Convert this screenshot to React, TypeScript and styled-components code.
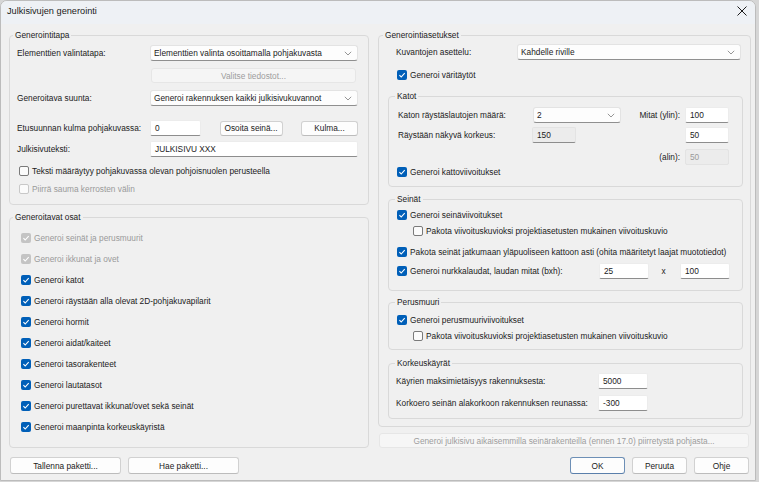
import React from 'react';
import styled, { createGlobalStyle } from 'styled-components';

const GlobalStyle = createGlobalStyle`
  html, body {
    margin: 0;
    padding: 0;
    background: #d6d6d6;
  }
  body {
    font-family: "Liberation Sans", Arial, sans-serif;
    font-size: 8.3px;
    color: #1b1b1b;
  }
  * {
    box-sizing: border-box;
  }
`;

const Chevron = () => (
  <svg width="8" height="5" viewBox="0 0 8 5">
    <path d="M0.8 0.8 L4 4 L7.2 0.8" fill="none" stroke="#8a8a8a" strokeWidth="0.9" />
  </svg>
);

const CheckMark = () => (
  <svg width="10" height="10" viewBox="0 0 10 10">
    <path d="M2.4 5.2 L4.2 7 L7.7 3.2" fill="none" stroke="#fff" strokeWidth="1.1" />
  </svg>
);

const Select: React.FC<{ value: string }> = ({ value }) => (
  <SelectBox>
    <span>{value}</span>
    <Chevron />
  </SelectBox>
);

const Check: React.FC<{
  label: string;
  checked?: boolean;
  disabled?: boolean;
  mt?: number;
  ml?: number;
}> = ({ label, checked, disabled, mt = 0, ml = 0 }) => (
  <CheckRow $mt={mt} $ml={ml}>
    <CheckBox $checked={!!checked} $disabled={!!disabled}>
      {checked && <CheckMark />}
    </CheckBox>
    <CheckText $disabled={!!disabled}>{label}</CheckText>
  </CheckRow>
);

const osat = [
  { label: 'Generoi seinät ja perusmuurit', disabled: true },
  { label: 'Generoi ikkunat ja ovet', disabled: true },
  { label: 'Generoi katot' },
  { label: 'Generoi räystään alla olevat 2D-pohjakuvapilarit' },
  { label: 'Generoi hormit' },
  { label: 'Generoi aidat/kaiteet' },
  { label: 'Generoi tasorakenteet' },
  { label: 'Generoi lautatasot' },
  { label: 'Generoi purettavat ikkunat/ovet sekä seinät' },
  { label: 'Generoi maanpinta korkeuskäyristä' },
];

const App: React.FC = () => {
  return (
    <>
      <GlobalStyle />
      <Window>
        <TitleBar>
          <Title>Julkisivujen generointi</Title>
          <svg width="10" height="10" viewBox="0 0 10 10">
            <path d="M0.5 0.5 L9.5 9.5 M9.5 0.5 L0.5 9.5" stroke="#1b1b1b" strokeWidth="1" />
          </svg>
        </TitleBar>

        <Body>
          <Columns>
            <Column>
              <Group>
                <Legend $ml={3}>Generointitapa</Legend>
                <Stack $pad="5px 10px 8px 7px">
                  <FormRow $cols="133px 1fr">
                    <Label>Elementtien valintatapa:</Label>
                    <Select value="Elementtien valinta osoittamalla pohjakuvasta" />
                  </FormRow>
                  <FormRow $cols="134px 1fr" $mt={7} $h={14}>
                    <span />
                    <Button $disabled $w={205}>Valitse tiedostot...</Button>
                  </FormRow>
                  <FormRow $cols="133px 1fr" $mt={8}>
                    <Label>Generoitava suunta:</Label>
                    <Select value="Generoi rakennuksen kaikki julkisivukuvannot" />
                  </FormRow>
                  <FormRow $cols="133px 1fr" $mt={14}>
                    <Label>Etusuunnan kulma pohjakuvassa:</Label>
                    <Inline>
                      <Field $w={51}>0</Field>
                      <Button $w={63}>Osoita seinä...</Button>
                      <Button $w={57}>Kulma...</Button>
                    </Inline>
                  </FormRow>
                  <FormRow $cols="133px 1fr" $mt={5}>
                    <Label>Julkisivuteksti:</Label>
                    <Field>JULKISIVU XXX</Field>
                  </FormRow>
                  <Check mt={7} ml={2} label="Teksti määräytyy pohjakuvassa olevan pohjoisnuolen perusteella" />
                  <Check mt={4} ml={2} disabled label="Piirrä sauma kerrosten välin" />
                </Stack>
              </Group>

              <Group $mt={7}>
                <Legend $ml={3}>Generoitavat osat</Legend>
                <Stack $pad="9px 10px 13px 11px" $gap={7}>
                  {osat.map((o) => (
                    <Check key={o.label} label={o.label} checked disabled={o.disabled} />
                  ))}
                </Stack>
              </Group>
            </Column>

            <Column>
              <Group>
                <Legend $ml={4}>Generointiasetukset</Legend>
                <Stack $pad="4px 7px 7px 9px">
                  <FormRow $cols="121px 1fr" $pl={8} $pr={2}>
                    <Label>Kuvantojen asettelu:</Label>
                    <Select value="Kahdelle riville" />
                  </FormRow>
                  <Check mt={8} ml={9} checked label="Generoi väritäytöt" />

                  <Group $mt={9}>
                    <Legend $ml={6}>Katot</Legend>
                    <Stack $pad="6px 13px 7px 8px">
                      <FormRow $cols="135px 88px 1fr 44px" $pl={1}>
                        <Label>Katon räystäslautojen määrä:</Label>
                        <Select value="2" />
                        <SideLabel>Mitat (ylin):</SideLabel>
                        <Field>100</Field>
                      </FormRow>
                      <FormRow $cols="134px 88px 1fr 44px" $pl={1} $mt={4}>
                        <Label>Räystään näkyvä korkeus:</Label>
                        <Field $w={44} $grey>150</Field>
                        <span />
                        <Field>50</Field>
                      </FormRow>
                      <FormRow $cols="134px 88px 1fr 44px" $pl={1} $mt={6}>
                        <span />
                        <span />
                        <SideLabel>(alin):</SideLabel>
                        <Field $disabled>50</Field>
                      </FormRow>
                      <Check checked label="Generoi kattoviivoitukset" />
                    </Stack>
                  </Group>

                  <Group $mt={7}>
                    <Legend $ml={6}>Seinät</Legend>
                    <Stack $pad="4px 12px 11px 8px">
                      <Check checked label="Generoi seinäviivoitukset" />
                      <Check mt={2} ml={16} label="Pakota viivoituskuvioksi projektiasetusten mukainen viivoituskuvio" />
                      <Check mt={7} checked label="Pakota seinät jatkumaan yläpuoliseen kattoon asti (ohita määritetyt laajat muototiedot)" />
                      <FormRow $cols="1fr 50px 31px 50px" $mt={4}>
                        <Check checked label="Generoi nurkkalaudat, laudan mitat (bxh):" />
                        <Field>25</Field>
                        <Times>x</Times>
                        <Field>100</Field>
                      </FormRow>
                    </Stack>
                  </Group>

                  <Group $mt={6}>
                    <Legend $ml={6}>Perusmuuri</Legend>
                    <Stack $pad="6px 12px 6px 8px">
                      <Check checked label="Generoi perusmuuriviivoitukset" />
                      <Check mt={2} ml={16} label="Pakota viivoituskuvioksi projektiasetusten mukainen viivoituskuvio" />
                    </Stack>
                  </Group>

                  <Group $mt={8}>
                    <Legend $ml={6}>Korkeuskäyrät</Legend>
                    <Stack $pad="5px 12px 7px 7px">
                      <FormRow $cols="202px 50px">
                        <Label>Käyrien maksimietäisyys rakennuksesta:</Label>
                        <Field>5000</Field>
                      </FormRow>
                      <FormRow $cols="202px 50px" $mt={6}>
                        <Label>Korkoero seinän alakorkoon rakennuksen reunassa:</Label>
                        <Field>-300</Field>
                      </FormRow>
                    </Stack>
                  </Group>
                </Stack>
              </Group>

              <WideButton disabled>
                Generoi julkisivu aikaisemmilla seinärakenteilla (ennen 17.0) piirretystä pohjasta...
              </WideButton>
            </Column>
          </Columns>

          <Footer>
            <ButtonGroup>
              <Button $w={111} $h={17}>Tallenna paketti...</Button>
              <Button $w={111} $h={17}>Hae paketti...</Button>
            </ButtonGroup>
            <ButtonGroup>
              <Button $w={55} $h={17} $primary>OK</Button>
              <Button $w={55} $h={17}>Peruuta</Button>
              <Button $w={55} $h={17}>Ohje</Button>
            </ButtonGroup>
          </Footer>
        </Body>
      </Window>
    </>
  );
};

export default App;

const Window = styled.div`
  width: 756px;
  height: 481px;
  background: #f0f0f0;
  border: 1px solid #bcbcbc;
  border-radius: 7px 7px 0 0;
  display: flex;
  flex-direction: column;
  overflow: hidden;
`;

const TitleBar = styled.div`
  height: 23px;
  flex: none;
  background: #eef1f5;
  display: flex;
  align-items: center;
  justify-content: space-between;
  padding: 0 8px 3px 6px;
`;

const Title = styled.span`
  font-size: 9.2px;
  color: #1b1b1b;
`;

const Body = styled.div`
  padding: 6px 4px 0 8px;
  display: flex;
  flex-direction: column;
`;

const Columns = styled.div`
  display: grid;
  grid-template-columns: 360px 373px;
  column-gap: 9px;
  align-items: start;
`;

const Column = styled.div`
  display: flex;
  flex-direction: column;
`;

const Group = styled.fieldset<{ $mt?: number }>`
  margin: ${(p) => p.$mt ?? 0}px 0 0 0;
  padding: 0;
  min-width: 0;
  border: 1px solid #d9d9d9;
  border-radius: 4px;
`;

const Legend = styled.legend<{ $ml: number }>`
  margin-left: ${(p) => p.$ml}px;
  padding: 0 2px;
  line-height: 10px;
  height: 10px;
  color: #1b1b1b;
`;

const Stack = styled.div<{ $pad: string; $gap?: number }>`
  display: flex;
  flex-direction: column;
  gap: ${(p) => p.$gap ?? 0}px;
  padding: ${(p) => p.$pad};
`;

const FormRow = styled.div<{ $cols: string; $mt?: number; $h?: number; $pl?: number; $pr?: number }>`
  display: grid;
  grid-template-columns: ${(p) => p.$cols};
  align-items: center;
  height: ${(p) => p.$h ?? 16}px;
  margin-top: ${(p) => p.$mt ?? 0}px;
  padding: 0 ${(p) => p.$pr ?? 0}px 0 ${(p) => p.$pl ?? 0}px;
`;

const Label = styled.span`
  white-space: nowrap;
  color: #1b1b1b;
`;

const SideLabel = styled.span`
  justify-self: end;
  padding-right: 5px;
  white-space: nowrap;
`;

const Times = styled.span`
  text-align: center;
  padding-right: 2px;
`;

const Inline = styled.div`
  display: flex;
  align-items: center;
  justify-content: space-between;
  height: 16px;
`;

const SelectBox = styled.div`
  height: 16px;
  display: flex;
  align-items: center;
  justify-content: space-between;
  padding: 0 5px 0 3px;
  background: #fdfdfd;
  border: 1px solid #e3e3e3;
  border-bottom-color: #8f8f8f;
  border-radius: 3px;
  white-space: nowrap;
`;

const Field = styled.div<{ $w?: number; $grey?: boolean; $disabled?: boolean }>`
  width: ${(p) => (p.$w ? `${p.$w}px` : 'auto')};
  height: 16px;
  display: flex;
  align-items: center;
  padding-left: 4px;
  white-space: nowrap;
  background: ${(p) => (p.$grey || p.$disabled ? '#ececec' : '#ffffff')};
  color: ${(p) => (p.$disabled ? '#9a9a9a' : '#1b1b1b')};
  border: 1px solid ${(p) => (p.$grey || p.$disabled ? '#e3e3e3' : '#ececec')};
  border-bottom-color: ${(p) => (p.$disabled ? '#e3e3e3' : '#8d8d8d')};
  border-radius: 2px;
`;

const Button = styled.button<{ $w?: number; $h?: number; $disabled?: boolean; $primary?: boolean }>`
  width: ${(p) => (p.$w ? `${p.$w}px` : 'auto')};
  height: ${(p) => p.$h ?? 15}px;
  padding: 0;
  font-family: inherit;
  font-size: inherit;
  color: ${(p) => (p.$disabled ? '#9d9d9d' : '#1b1b1b')};
  background: ${(p) => (p.$disabled ? '#f5f5f5' : '#fdfdfd')};
  border: 1px solid ${(p) => (p.$primary ? '#6d8fb6' : p.$disabled ? '#e6e6e6' : '#d1d1d1')};
  border-bottom-color: ${(p) => (p.$primary ? '#5a7fab' : p.$disabled ? '#e6e6e6' : '#bcbcbc')};
  border-radius: 3px;
`;

const WideButton = styled.button`
  margin: 6px 2px 0 1px;
  height: 15px;
  padding: 0;
  font-family: inherit;
  font-size: inherit;
  color: #9d9d9d;
  background: #f6f6f6;
  border: 1px solid #e6e6e6;
  border-radius: 3px;
`;

const Footer = styled.div`
  margin-top: 9px;
  display: flex;
  justify-content: space-between;
  padding: 0 2px 0 1px;
`;

const ButtonGroup = styled.div`
  display: flex;
  gap: 7px;
`;

const CheckRow = styled.div<{ $mt: number; $ml: number }>`
  display: flex;
  align-items: center;
  gap: 3px;
  height: 14px;
  margin-top: ${(p) => p.$mt}px;
  margin-left: ${(p) => p.$ml}px;
  white-space: nowrap;
`;

const CheckBox = styled.span<{ $checked: boolean; $disabled: boolean }>`
  flex: none;
  width: 10px;
  height: 10px;
  border-radius: 2px;
  display: flex;
  background: ${(p) =>
    p.$checked ? (p.$disabled ? '#c4c4c4' : '#005fb8') : '#fbfbfb'};
  border: ${(p) =>
    p.$checked ? 'none' : `1px solid ${p.$disabled ? '#c8c8c8' : '#7a7a7a'}`};
`;

const CheckText = styled.span<{ $disabled: boolean }>`
  color: ${(p) => (p.$disabled ? '#9a9a9a' : '#1b1b1b')};
`;
